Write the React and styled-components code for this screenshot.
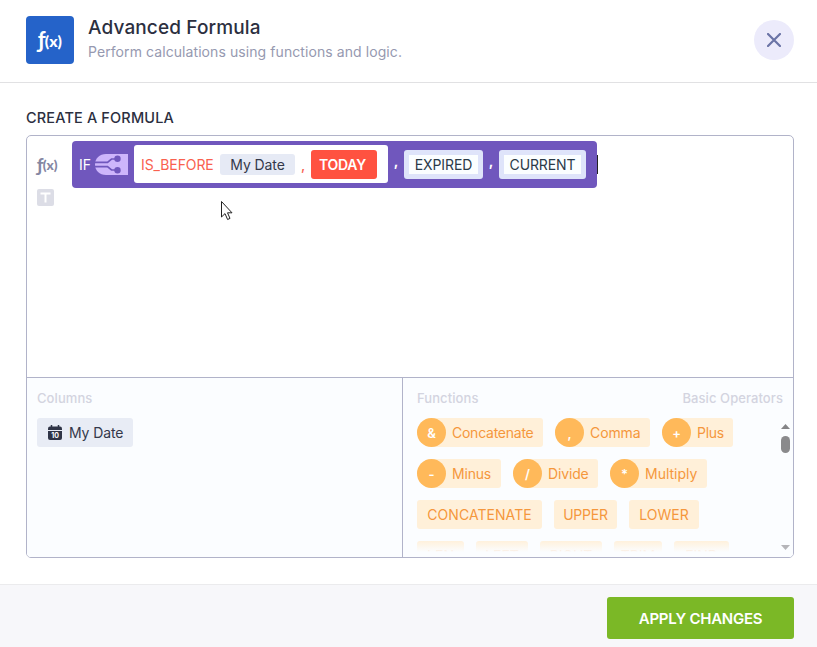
import React from "react";
import styled, { createGlobalStyle } from "styled-components";

const GlobalStyle = createGlobalStyle`
  * {
    box-sizing: border-box;
  }
  body {
    margin: 0;
    background: #fff;
    font-family: Inter, "Liberation Sans", sans-serif;
    color: #2c2f3f;
  }
`;

const Dialog = styled.div`
  position: relative;
  display: flex;
  flex-direction: column;
  height: 647px;
  overflow: hidden;
`;

const Header = styled.header`
  display: flex;
  height: 83px;
  padding: 16px 23px 0 26px;
  border-bottom: 1px solid #e1e1e3;
`;

const AppIcon = styled.div`
  display: flex;
  align-items: center;
  justify-content: center;
  width: 48px;
  height: 48px;
  border-radius: 4px;
  background: #2563c9;
`;

const Fx = styled.span`
  display: inline-flex;
  align-items: center;
  height: 18px;
  font-family: Lato, sans-serif;
  font-size: ${(props) => props.$size}px;
  font-weight: 700;
  line-height: 1;
  color: ${(props) => props.$color};

  small {
    margin: 0.08em 0 0 -1px;
    font-size: 0.72em;
    font-weight: 900;
    line-height: 1;
  }
`;

const Heading = styled.div`
  flex: 1;
  padding-left: 14px;
`;

const Title = styled.h1`
  margin: 0;
  font-size: 19px;
  font-weight: 500;
  line-height: 23px;
  letter-spacing: 0.13px;
`;

const Subtitle = styled.p`
  margin: 4px 0 0;
  font-size: 14px;
  line-height: 18px;
  letter-spacing: 0.08px;
  color: #9699b0;
`;

const CloseButton = styled.button`
  display: flex;
  align-items: center;
  justify-content: center;
  width: 40px;
  height: 40px;
  margin-top: 4px;
  padding: 0;
  border: none;
  border-radius: 50%;
  background: #ecebfb;
`;

const Main = styled.main`
  flex: 1;
  padding: 25px 23px 0 26px;
`;

const Label = styled.h2`
  margin: 0 0 8px;
  font-size: 14.5px;
  font-weight: 500;
  line-height: 19px;
  letter-spacing: 0.15px;
`;

const Editor = styled.section`
  height: 423px;
  border: 1px solid #b1b3c9;
  border-radius: 5px;
  overflow: hidden;
`;

const FormulaArea = styled.div`
  display: flex;
  height: 242px;
  padding: 5px 0 0 9px;
  border-bottom: 1px solid #b1b3c9;
`;

const Modes = styled.div`
  display: flex;
  flex-direction: column;
  width: 36px;
  padding: 14px 0 0 1px;
`;

const TextMode = styled.div`
  display: flex;
  align-items: center;
  justify-content: center;
  width: 17px;
  height: 17px;
  margin-top: 16px;
  border-radius: 2px;
  background: #dcdde6;
`;

const IfBlock = styled.div`
  display: flex;
  align-items: center;
  width: 525px;
  height: 47px;
  padding: 0 0 1px 7px;
  border-radius: 4px;
  background: #7057bd;
  color: #fff;
  font-size: 14px;
`;

const BranchIcon = styled.svg`
  width: 33px;
  height: 21px;
  margin-left: 4px;
`;

const Keyword = styled.span`
  width: 12px;
  white-space: nowrap;
`;

const ConditionBlock = styled.div`
  display: flex;
  align-items: center;
  width: 254px;
  height: 38px;
  margin-left: 6px;
  padding-left: 7px;
  border-radius: 3px;
  background: #fff;
`;

const ConditionName = styled.span`
  width: 79px;
  color: #f9614f;
  letter-spacing: -0.1px;
  white-space: nowrap;
`;

const ColumnToken = styled.span`
  display: flex;
  align-items: center;
  justify-content: center;
  width: 75px;
  height: 21px;
  border-radius: 3px;
  background: #e6eaf5;
  color: #34384a;
  letter-spacing: -0.1px;
`;

const TodayToken = styled.span`
  display: flex;
  align-items: center;
  width: 66px;
  height: 29px;
  padding-left: 8px;
  border-radius: 3px;
  background: #ff5240;
  color: #fff;
  font-weight: 600;
  letter-spacing: -0.25px;
`;

const Comma = styled.span`
  width: 16px;
  padding-bottom: 8px;
  text-align: center;
  font-weight: 700;
  color: ${(props) => props.$color || "#fff"};
`;

const ConditionComma = styled(Comma)`
  padding-bottom: 0;
  font-weight: 500;
`;

const StringToken = styled.span`
  display: flex;
  align-items: center;
  justify-content: center;
  width: ${(props) => props.$width}px;
  height: 29px;
  border: 5px solid #dfe4fa;
  border-radius: 3px;
  background: #fbfeff;
  color: #2b3a48;
  letter-spacing: -0.1px;
  white-space: nowrap;
`;

const Caret = styled.div`
  width: 1px;
  height: 19px;
  margin-top: 14px;
  background: #222;
`;

const Library = styled.div`
  display: flex;
  height: 179px;
  background: #fbfdff;
`;

const Columns = styled.div`
  width: 376px;
  padding: 12px 10px;
  border-right: 1px solid #b1b3c9;
`;

const Functions = styled.div`
  display: flex;
  flex-direction: column;
  flex: 1;
  padding: 12px 0 4px 14px;
`;

const PanelTitle = styled.div`
  display: flex;
  justify-content: space-between;
  padding-right: 10px;
  margin-bottom: 11px;
  font-size: 13px;
  font-weight: 500;
  letter-spacing: 0.08px;
  line-height: 17px;
  color: #d3d4e0;
`;

const ColumnChip = styled.div`
  display: flex;
  align-items: center;
  width: 96px;
  height: 29px;
  padding-left: 11px;
  gap: 7px;
  border-radius: 3px;
  background: #e8ecf5;
  color: #34384a;
  font-size: 14px;
  letter-spacing: -0.1px;
  white-space: nowrap;
`;

const ScrollArea = styled.div`
  position: relative;
  display: flex;
  flex: 1;
  justify-content: space-between;
  min-height: 0;
`;

const Rows = styled.div`
  display: flex;
  flex-direction: column;
  gap: 12px;
  height: 134px;
  overflow: hidden;
`;

const Row = styled.div`
  display: flex;
  flex-shrink: 0;
  gap: 12px;
`;

const Chip = styled.div`
  display: flex;
  align-items: center;
  justify-content: ${(props) => (props.$operator ? "flex-start" : "center")};
  gap: 6px;
  width: ${(props) => props.$width}px;
  height: 29px;
  border-radius: ${(props) => (props.$operator ? "15px 3px 3px 15px" : "3px")};
  background: #fff0d9;
  color: #f5973c;
  font-size: 14px;
  letter-spacing: ${(props) => props.$spacing || 0}px;
  white-space: nowrap;
`;

const Symbol = styled.span`
  display: flex;
  align-items: center;
  justify-content: center;
  width: 29px;
  height: 29px;
  border-radius: 50%;
  background: #ffb95a;
  color: #fff;
  font-size: 13px;
  font-weight: 600;
  letter-spacing: 0;
`;

const Fade = styled.div`
  position: absolute;
  left: 0;
  right: 20px;
  top: 122px;
  height: 12px;
  background: linear-gradient(rgba(251, 253, 255, 0), #fbfdff);
`;

const Scrollbar = styled.svg`
  width: 10px;
  height: 130px;
  margin: 4px 3px 0 0;
`;

const Footer = styled.footer`
  display: flex;
  justify-content: flex-end;
  height: 63px;
  padding: 12px 23px 0 0;
  border-top: 1px solid #ebebed;
  background: #f7f7fa;
`;

const ApplyButton = styled.button`
  width: 187px;
  height: 42px;
  border: none;
  border-radius: 3px;
  background: #7bb826;
  color: #fff;
  font-family: inherit;
  font-size: 15px;
  font-weight: 600;
  letter-spacing: -0.25px;
`;

const Pointer = styled.svg`
  position: absolute;
  left: 220px;
  top: 200px;
  width: 14px;
  height: 21px;
`;

const functionRows = [
  [
    { symbol: "&", name: "Concatenate", width: 126, spacing: -0.25 },
    { symbol: ",", name: "Comma", width: 95, spacing: -0.1 },
    { symbol: "+", name: "Plus", width: 71, spacing: -0.3 },
  ],
  [
    { symbol: "-", name: "Minus", width: 84, spacing: -0.2 },
    { symbol: "/", name: "Divide", width: 85, spacing: -0.15 },
    { symbol: "*", name: "Multiply", width: 97 },
  ],
  [
    { name: "CONCATENATE", width: 125, spacing: 0.05 },
    { name: "UPPER", width: 63, spacing: -0.2 },
    { name: "LOWER", width: 70 },
  ],
  [
    { name: "LEN", width: 47 },
    { name: "LEFT", width: 52 },
    { name: "RIGHT", width: 62 },
    { name: "TRIM", width: 48 },
    { name: "FIND", width: 55 },
  ],
];

function FxMark({ size, color }) {
  return (
    <Fx $size={size} $color={color}>
      ƒ<small>(x)</small>
    </Fx>
  );
}

function App() {
  return (
    <Dialog>
      <GlobalStyle />

      <Header>
        <AppIcon>
          <FxMark size={22} color="#fff" />
        </AppIcon>
        <Heading>
          <Title>Advanced Formula</Title>
          <Subtitle>Perform calculations using functions and logic.</Subtitle>
        </Heading>
        <CloseButton>
          <svg width="14" height="14" viewBox="0 0 14 14">
            <path d="M1 1L13 13M13 1L1 13" stroke="#6b74a6" strokeWidth="2.2" strokeLinecap="round" />
          </svg>
        </CloseButton>
      </Header>

      <Main>
        <Label>CREATE A FORMULA</Label>
        <Editor>
          <FormulaArea>
            <Modes>
              <FxMark size={19} color="#8587a3" />
              <TextMode>
                <svg width="11" height="11" viewBox="0 0 11 11">
                  <path d="M0.500 1.500H10.500M5.500 1.500V10.500" stroke="#fff" strokeWidth="2" fill="none" />
                </svg>
              </TextMode>
            </Modes>

            <IfBlock>
              <Keyword>IF</Keyword>
              <BranchIcon viewBox="0 0 33 21">
                <path d="M11 0H33V21H11C4.500 21 0 16.500 0 10.500C0 4.500 4.500 0 11 0Z" fill="#cdb5fb" />
                <path d="M0 8.300H12.500L16.500 5H22M0 12.700H12.500L16.500 16H22" stroke="#7057bd" strokeWidth="1.700" fill="none" />
                <circle cx="22.500" cy="4.700" r="3.200" fill="#7057bd" />
                <circle cx="22.500" cy="16.300" r="3.200" fill="#7057bd" />
              </BranchIcon>
              <ConditionBlock>
                <ConditionName>IS_BEFORE</ConditionName>
                <ColumnToken>My Date</ColumnToken>
                <ConditionComma $color="#f9614f">,</ConditionComma>
                <TodayToken>TODAY</TodayToken>
              </ConditionBlock>
              <Comma>,</Comma>
              <StringToken $width={79}>EXPIRED</StringToken>
              <Comma>,</Comma>
              <StringToken $width={87}>CURRENT</StringToken>
            </IfBlock>
            <Caret />
          </FormulaArea>

          <Library>
            <Columns>
              <PanelTitle>Columns</PanelTitle>
              <ColumnChip>
                <svg width="14" height="15" viewBox="0 0 14 15">
                  <path d="M3.500 0V3M10.500 0V3" stroke="#2f3446" strokeWidth="1.500" />
                  <path d="M0 5V3.500Q0 1.500 2 1.500H12Q14 1.500 14 3.500V5Z" fill="#2f3446" />
                  <path d="M0 6H14V13Q14 15 12 15H2Q0 15 0 13Z" fill="#2f3446" />
                  <text x="7" y="13" fontSize="7" fontWeight="700" textAnchor="middle" fill="#fff">10</text>
                </svg>
                My Date
              </ColumnChip>
            </Columns>

            <Functions>
              <PanelTitle>
                <span>Functions</span>
                <span>Basic Operators</span>
              </PanelTitle>
              <ScrollArea>
                <Rows>
                  {functionRows.map((row, index) => (
                    <Row key={index}>
                      {row.map((item) => (
                        <Chip
                          key={item.name}
                          $width={item.width}
                          $spacing={item.spacing}
                          $operator={!!item.symbol}
                        >
                          {item.symbol && <Symbol>{item.symbol}</Symbol>}
                          {item.name}
                        </Chip>
                      ))}
                    </Row>
                  ))}
                </Rows>
                <Fade />
                <Scrollbar viewBox="0 0 10 130">
                  <path d="M1 7L5.500 2L10 7Z" fill="#858587" />
                  <rect x="1" y="14" width="9" height="17" rx="4.500" fill="#8a8a8c" />
                  <path d="M1 123L5.500 128L10 123Z" fill="#b5b5b9" />
                </Scrollbar>
              </ScrollArea>
            </Functions>
          </Library>
        </Editor>
      </Main>

      <Footer>
        <ApplyButton>APPLY CHANGES</ApplyButton>
      </Footer>

      <Pointer viewBox="0 0 14 21">
        <path
          d="M1.500 1.500V17L5 13.600L7.600 19.500L10 18.400L7.500 12.800H12Z"
          fill="#fff"
          stroke="#222"
          strokeWidth="1"
        />
      </Pointer>
    </Dialog>
  );
}

export default App;
